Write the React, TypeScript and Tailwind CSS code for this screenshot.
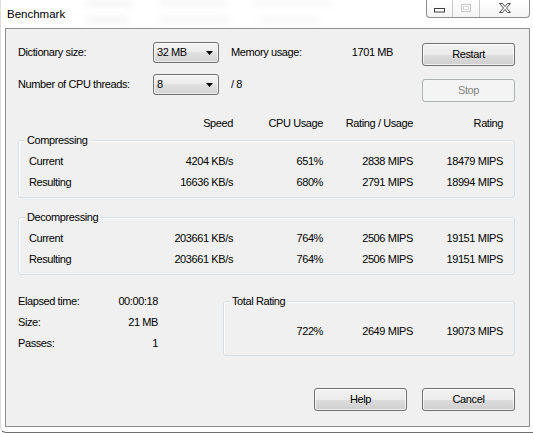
import React from 'react';

const cols = 'grid grid-cols-[125px_90px_90px_90px_90px] items-center';
const groupCols = 'grid grid-cols-[124px_90px_90px_90px_90px] items-center';

function Combo({ value }: { value: string }) {
  return (
    <div className="flex h-[21px] w-[66px] items-center rounded-[3px] border border-[#707070] bg-[linear-gradient(#f3f3f3,#ececec_50%,#e0e0e0_50%,#d4d4d4)] pl-[3px] pr-[5px] shadow-[inset_0_0_0_1px_rgba(255,255,255,0.6)]">
      <span className="flex-1">{value}</span>
      <svg width="7" height="4" viewBox="0 0 7 4">
        <path d="M0 0h7L3.5 4z" fill="#000" />
      </svg>
    </div>
  );
}

function Button({ label, disabled }: { label: string; disabled?: boolean }) {
  return (
    <div
      className={
        disabled
          ? 'flex h-[23px] w-[93px] items-center justify-center rounded-[3px] border border-[#adb2b5] bg-[#f4f4f4] text-[#838383]'
          : 'flex h-[23px] w-[93px] items-center justify-center rounded-[3px] border border-[#707070] bg-[linear-gradient(#f2f2f2,#ebebeb_50%,#dddddd_50%,#cfcfcf)] shadow-[inset_0_0_0_1px_rgba(255,255,255,0.7)]'
      }
    >
      {label}
    </div>
  );
}

function Group({ title, children, className }: { title: string; children: React.ReactNode; className: string }) {
  return (
    <div className={`relative rounded-[3px] border border-[#d5dfe5] shadow-[inset_1px_1px_0_#fff] ${className}`}>
      {/* caption sits on the top border */}
      <span className="absolute left-[6px] top-[-7px] bg-[#f0f0f0] px-[2px] leading-[13px]">{title}</span>
      {children}
    </div>
  );
}

function DataRow({ label, values }: { label: string; values: string[] }) {
  return (
    <div className={`${groupCols} h-[21px]`}>
      <span className="pl-[10px]">{label}</span>
      {values.map((v, i) => (
        <span key={i} className="text-right">
          {v}
        </span>
      ))}
    </div>
  );
}

function CaptionButtons() {
  return (
    <div className="mr-[3px] ml-auto flex h-[18px] w-[104px] rounded-b-[4px] border-x border-b border-[#8d8d8d] bg-[linear-gradient(#ffffff,#f4f4f4)]">
      <div className="flex w-[26px] items-center justify-center border-r border-[#c9c9c9] pt-[3px]">
        <svg width="11" height="5" viewBox="0 0 11 5">
          <rect x="0.5" y="0.5" width="10" height="3.5" fill="#fff" stroke="#3f3f3f" />
        </svg>
      </div>
      <div className="flex w-[27px] items-center justify-center border-r border-[#c9c9c9] pb-[1px]">
        <svg width="10" height="8" viewBox="0 0 10 8">
          <rect x="0.5" y="0.5" width="9" height="7" fill="#fff" stroke="#c6c6c6" />
          <rect x="2.5" y="2.5" width="5" height="3" fill="none" stroke="#d6d6d6" />
        </svg>
      </div>
      <div className="flex flex-1 items-center justify-center pb-[1px]">
        <svg width="12" height="10" viewBox="0 0 12 10">
          <path
            d="M0.5 0.5h3l2.5 3 2.5-3h3l-4 4.5 4 4.5h-3L6 6.5 3.5 9.5h-3l4-4.5z"
            fill="#fff"
            stroke="#4b4b4b"
            strokeWidth="1"
            strokeLinejoin="round"
          />
        </svg>
      </div>
    </div>
  );
}

export default function App() {
  return (
    <div className="h-[434px] w-[533px] overflow-hidden bg-white font-['Liberation_Sans',Arial,sans-serif] text-[11px] tracking-[-0.4px] text-black">
      <div className="flex h-[433px] flex-col rounded-bl-[6px] border-b border-l border-b-[#6f6f6f] border-l-[#dcdcdc]">
        {/* title bar, with the blurred glass behind it */}
        <div className="flex h-[28px] items-start">
          <span className="pt-[8px] pl-[6px] text-[11.5px] leading-[13px] tracking-normal">Benchmark</span>
          <div className="flex flex-1 flex-col gap-[11px] pt-[1px] pl-[20px] opacity-50">
            <div className="flex gap-[25px]">
              <span className="h-[5px] w-[48px] rounded-full bg-[#e4e4e4] blur-[3px]" />
              <span className="h-[5px] w-[70px] rounded-full bg-[#ebebeb] blur-[3px]" />
              <span className="h-[5px] w-[80px] rounded-full bg-[#eeeeee] blur-[3px]" />
            </div>
            <div className="flex gap-[30px]">
              <span className="h-[6px] w-[44px] rounded-full bg-[#e6e6e6] blur-[3px]" />
              <span className="h-[6px] w-[70px] rounded-full bg-[#eaeaea] blur-[3px]" />
              <span className="h-[6px] w-[60px] rounded-full bg-[#eeeeee] blur-[3px]" />
            </div>
          </div>
          <CaptionButtons />
        </div>

        {/* client area */}
        <div className="ml-[4px] flex h-[399px] w-[525px] flex-col border border-[#8e8e8e] bg-[#f0f0f0] pr-[14px] pl-[12px]">
          <div className="mt-[13px] flex">
            <div className="flex flex-col gap-[11px]">
              <div className="flex h-[21px] items-center">
                <span className="w-[135px]">Dictionary size:</span>
                <Combo value="32 MB" />
                <div className="ml-[12px] flex w-[162px] justify-between">
                  <span>Memory usage:</span>
                  <span>1701 MB</span>
                </div>
              </div>
              <div className="flex h-[21px] items-center">
                <span className="w-[135px]">Number of CPU threads:</span>
                <Combo value="8" />
                <span className="ml-[12px]">/ 8</span>
              </div>
            </div>
            <div className="ml-auto flex flex-col gap-[13px] pt-[1px]">
              <Button label="Restart" />
              <Button label="Stop" disabled />
            </div>
          </div>

          <div className={`${cols} mt-[11px] h-[21px]`}>
            <span />
            <span className="text-right">Speed</span>
            <span className="text-right">CPU Usage</span>
            <span className="text-right">Rating / Usage</span>
            <span className="text-right">Rating</span>
          </div>

          <Group title="Compressing" className="mt-[6px] h-[58px] pt-[10px]">
            <DataRow label="Current" values={['4204 KB/s', '651%', '2838 MIPS', '18479 MIPS']} />
            <DataRow label="Resulting" values={['16636 KB/s', '680%', '2791 MIPS', '18994 MIPS']} />
          </Group>

          <Group title="Decompressing" className="mt-[19px] h-[58px] pt-[10px]">
            <DataRow label="Current" values={['203661 KB/s', '764%', '2506 MIPS', '19151 MIPS']} />
            <DataRow label="Resulting" values={['203661 KB/s', '764%', '2506 MIPS', '19151 MIPS']} />
          </Group>

          <div className="mt-[16px] flex items-start">
            <div className="flex w-[140px] flex-col">
              <div className="flex h-[21px] items-center justify-between">
                <span>Elapsed time:</span>
                <span>00:00:18</span>
              </div>
              <div className="flex h-[21px] items-center justify-between">
                <span>Size:</span>
                <span>21 MB</span>
              </div>
              <div className="flex h-[21px] items-center justify-between">
                <span>Passes:</span>
                <span>1</span>
              </div>
            </div>
            <Group title="Total Rating" className="mt-[10px] ml-[65px] h-[55px] w-[292px] pt-[19px]">
              <div className="grid h-[21px] grid-cols-[99px_90px_90px] items-center text-right">
                <span>722%</span>
                <span>2649 MIPS</span>
                <span>19073 MIPS</span>
              </div>
            </Group>
          </div>

          <div className="mt-auto flex justify-end gap-[15px] pb-[15px]">
            <Button label="Help" />
            <Button label="Cancel" />
          </div>
        </div>
      </div>
    </div>
  );
}
